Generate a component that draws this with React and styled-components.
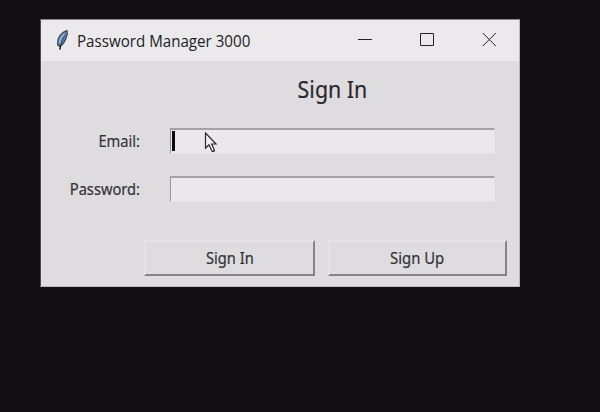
import React from 'react';
import styled, { createGlobalStyle } from 'styled-components';

const GlobalStyle = createGlobalStyle`
  * { box-sizing: border-box; }
  body { margin: 0; background: #110f11; overflow: hidden; }
`;

const Desktop = styled.main`
  width: 600px;
  height: 412px;
  padding: 19px 0 0 40px;
  background: #110f11;
  font-family: "Noto Sans", "Open Sans", sans-serif;
`;

const Window = styled.section`
  width: 480px;
  height: 268px;
  border: 1px solid #b9b7ba;
  border-top-color: #858386;
  border-left-color: #4c4a4d;
  background: #dedcdf;
`;

const TitleBar = styled.header`
  display: flex;
  align-items: center;
  height: 41px;
  padding-left: 13px;
  background: #ebe9ec;
`;

const Title = styled.h1`
  flex: 1;
  margin: 0 0 0 6px;
  font: 400 16px/22px "Open Sans", sans-serif;
  color: #222124;
  white-space: nowrap;
  transform: scaleX(${(p) => p.$stretch});
  transform-origin: left;
`;

const Controls = styled.div`
  display: flex;
  gap: 48px;
  padding: 0 23px 1px 0;
`;

const Form = styled.form`
  display: grid;
  grid-template-rows: 67px 25px 23px 25px 85px;
  height: 225px;
`;

const Heading = styled.h2`
  margin: 12px 0 0 131px;
  width: 320px;
  text-align: center;
  font-weight: 400;
  font-size: 23px;
  line-height: 32px;
  color: #29282e;
`;

const Text = styled.span`
  display: inline-block;
  -webkit-text-stroke: 0.2px currentColor;
  transform: scaleX(${(p) => p.$stretch});
  transform-origin: ${(p) => p.$origin || 'center'};
`;

const Field = styled.label`
  grid-row: ${(p) => p.$row};
  display: grid;
  grid-template-columns: 99px 325px;
  column-gap: 30px;
  align-items: center;
  font-size: 16.3px;
  line-height: 24px;
  text-align: right;
  color: #343238;
`;

const Entry = styled.span`
  display: flex;
  height: 26px;
  padding: 1px 0 0;
  border: solid #e3e1e4;
  border-width: 2px 1px 1px 1px;
  border-top-color: #a4a2a5;
  border-left-color: #979598;
  background: #eae8eb;
`;

const Caret = styled.i`
  width: 3px;
  height: 20px;
  margin-left: 1px;
  background: #0b0a0c;
`;

const Pointer = styled.svg`
  margin: 1px 0 0 29px;
`;

const Actions = styled.div`
  grid-row: 5;
  display: flex;
  gap: 13px;
  margin: 39px 0 0 103px;
`;

const Button = styled.button`
  width: ${(p) => p.$width}px;
  height: 36px;
  padding: 0;
  border: 2px solid;
  border-color: #e5e3e6 #858388 #858388 #e5e3e6;
  background: #dedcdf;
  color: #343238;
  font: 400 16.5px/24px "Noto Sans", sans-serif;
`;

function Feather() {
  return (
    <svg width="17" height="24" viewBox="0 0 17 24" fill="none">
      <path d="M13 1.5C9 2.5 5 6.5 4 10.5L3.5 16L6 17.5C10 15 12 10.5 13.3 5Z" fill="#5c7fae" stroke="#3b414c" strokeWidth="1.1" />
      <path d="M10.5 5C8 7 6 10.5 5.5 14" stroke="#91b1d6" strokeWidth="2" />
      <path d="M11 6C8.5 9 7 14 6 20.5" stroke="#344361" strokeWidth="0.9" />
      <path d="M6.6 16L6 20.5" stroke="#25262b" strokeWidth="1.5" />
    </svg>
  );
}

export default function App() {
  return (
    <>
      <GlobalStyle />
      <Desktop>
        <Window>
          <TitleBar>
            <Feather />
            <Title $stretch={0.946}>Password Manager 3000</Title>
            <Controls>
              <svg width="14" height="14" fill="none" stroke="#242326"><path d="M0 6.5H14" /></svg>
              <svg width="14" height="14" fill="none" stroke="#242326"><path d="M.5 .5H13.5V12.5H.5Z" /></svg>
              <svg width="14" height="14" fill="none" stroke="#242326"><path d="M.8 0L13.8 13M13.8 0L.8 13" /></svg>
            </Controls>
          </TitleBar>
          <Form>
            <Heading><Text $stretch={0.93}>Sign In</Text></Heading>
            <Field $row={2}>
              <Text $stretch={0.9} $origin="right">Email:</Text>
              <Entry>
                <Caret />
                <Pointer width="14" height="21" viewBox="0 0 14 21">
                  <path d="M1.5 1V16L5 12.7L8 19.2Q9.2 20 10.5 18.5L7.7 12H12Z" fill="#f1eff2" stroke="#29272b" strokeWidth="1.2" />
                </Pointer>
              </Entry>
            </Field>
            <Field $row={4}>
              <Text $stretch={0.9} $origin="right">Password:</Text>
              <Entry />
            </Field>
            <Actions>
              <Button type="button" $width={171}><Text $stretch={0.89}>Sign In</Text></Button>
              <Button type="button" $width={179}><Text $stretch={0.9}>Sign Up</Text></Button>
            </Actions>
          </Form>
        </Window>
      </Desktop>
    </>
  );
}
